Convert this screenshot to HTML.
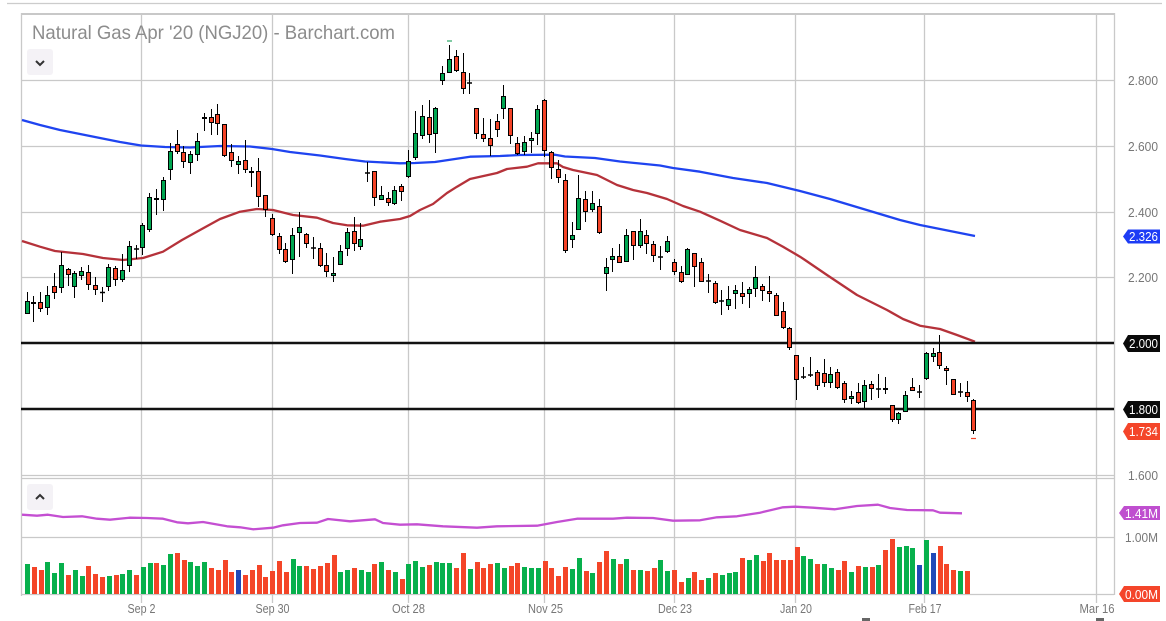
<!DOCTYPE html>
<html><head><meta charset="utf-8"><title>Natural Gas Apr '20 (NGJ20) - Barchart.com</title>
<style>html,body{margin:0;padding:0;background:#fff;width:1166px;height:621px;overflow:hidden}svg{display:block}text{font-family:"Liberation Sans",sans-serif}</style></head>
<body>
<svg width="1166" height="621" viewBox="0 0 1166 621" xmlns="http://www.w3.org/2000/svg">
<rect width="1166" height="621" fill="#fff"/>
<path d="M7 3.5H1162" stroke="#ccc" stroke-width="1.2" fill="none"/>
<path d="M21 14H1115" stroke="#c8c8c8" stroke-width="2" fill="none"/>
<path d="M21.5 13V596M1114.5 13V595M141.5 14V603M272.5 14V603M408.5 14V603M544.5 14V603M674.5 14V603M795.5 14V603M924.5 14V603M1096.5 14V603M21 80.5H1114M21 146.5H1114M21 212.5H1114M21 277.5H1114M21 475.5H1114M21 478.5H1114M21 537.5H1114M21 594.5H1114" stroke="#c9c9c9" stroke-width="1.3" fill="none"/>
<text x="32" y="39" font-size="19.5" fill="#8c8c8c" textLength="363" lengthAdjust="spacingAndGlyphs">Natural Gas Apr '20 (NGJ20) - Barchart.com</text>
<rect x="27" y="49" width="26" height="26" rx="3" fill="#f4f2f6"/>
<path d="M36 61l4 4 4-4" fill="none" stroke="#333" stroke-width="2"/>
<rect x="27" y="484" width="26" height="26" rx="3" fill="#f4f2f6"/>
<path d="M36 499l4-4 4 4" fill="none" stroke="#333" stroke-width="2"/>

<path fill="#07b04c" d="M25 564h5V594h-5zM45 562h5V594h-5zM52 573h5V594h-5zM59 563h5V594h-5zM73 570h5V594h-5zM80 576h5V594h-5zM107 576h5V594h-5zM120 574h5V594h-5zM127 570h5V594h-5zM141 567h5V594h-5zM148 563h5V594h-5zM161 565h5V594h-5zM168 554h5V594h-5zM188 562h5V594h-5zM195 566h5V594h-5zM202 562h5V594h-5zM291 559h5V594h-5zM297 566h5V594h-5zM338 572h5V594h-5zM345 570h5V594h-5zM359 570h5V594h-5zM366 572h5V594h-5zM379 562h5V594h-5zM393 572h5V594h-5zM406 564h5V594h-5zM413 561h5V594h-5zM420 567h5V594h-5zM434 562h5V594h-5zM440 563h5V594h-5zM447 563h5V594h-5zM468 569h5V594h-5zM495 563h5V594h-5zM502 568h5V594h-5zM522 567h5V594h-5zM529 568h5V594h-5zM536 568h5V594h-5zM570 569h5V594h-5zM577 558h5V594h-5zM590 573h5V594h-5zM611 559h5V594h-5zM624 559h5V594h-5zM638 570h5V594h-5zM658 560h5V594h-5zM665 571h5V594h-5zM686 578h5V594h-5zM706 578h5V594h-5zM720 575h5V594h-5zM727 573h5V594h-5zM733 572h5V594h-5zM747 560h5V594h-5zM754 555h5V594h-5zM801 556h5V594h-5zM808 559h5V594h-5zM822 564h5V594h-5zM829 568h5V594h-5zM849 572h5V594h-5zM863 567h5V594h-5zM876 565h5V594h-5zM897 547h5V594h-5zM904 546h5V594h-5zM910 548h5V594h-5zM924 540h5V594h-5zM958 571h5V594h-5z"/>
<path fill="#f44528" d="M32 567h5V594h-5zM39 570h5V594h-5zM66 575h5V594h-5zM86 566h5V594h-5zM93 574h5V594h-5zM100 577h5V594h-5zM114 575h5V594h-5zM134 575h5V594h-5zM154 563h5V594h-5zM175 553h5V594h-5zM182 560h5V594h-5zM209 568h5V594h-5zM216 570h5V594h-5zM223 560h5V594h-5zM229 572h5V594h-5zM243 575h5V594h-5zM250 570h5V594h-5zM257 565h5V594h-5zM263 577h5V594h-5zM270 571h5V594h-5zM277 561h5V594h-5zM284 572h5V594h-5zM304 566h5V594h-5zM311 569h5V594h-5zM318 566h5V594h-5zM325 563h5V594h-5zM332 555h5V594h-5zM352 568h5V594h-5zM372 564h5V594h-5zM386 570h5V594h-5zM400 579h5V594h-5zM427 565h5V594h-5zM454 568h5V594h-5zM461 553h5V594h-5zM475 562h5V594h-5zM481 568h5V594h-5zM488 564h5V594h-5zM509 566h5V594h-5zM515 563h5V594h-5zM543 561h5V594h-5zM549 568h5V594h-5zM556 576h5V594h-5zM563 567h5V594h-5zM584 571h5V594h-5zM597 562h5V594h-5zM604 551h5V594h-5zM618 564h5V594h-5zM631 570h5V594h-5zM645 571h5V594h-5zM652 568h5V594h-5zM672 570h5V594h-5zM679 582h5V594h-5zM692 572h5V594h-5zM699 580h5V594h-5zM713 573h5V594h-5zM740 558h5V594h-5zM761 561h5V594h-5zM767 553h5V594h-5zM774 560h5V594h-5zM781 560h5V594h-5zM788 560h5V594h-5zM795 547h5V594h-5zM815 564h5V594h-5zM836 570h5V594h-5zM842 561h5V594h-5zM856 566h5V594h-5zM870 567h5V594h-5zM883 550h5V594h-5zM890 539h5V594h-5zM938 546h5V594h-5zM944 564h5V594h-5zM951 570h5V594h-5zM965 571h5V594h-5z"/>
<path fill="#2049b8" d="M236 570h5V594h-5zM917 565h5V594h-5zM931 553h5V594h-5z"/>

<polyline fill="none" stroke="#c44fd2" stroke-width="2.3" stroke-linejoin="round" points="22,514.7 37,515.7 48,514.7 63,517 82,516.3 97,518.7 110,519.7 130,517.7 147,518 163,518.7 177,522.3 188,523.3 203,522 227,526.3 240,527.3 253,529.3 273,527.7 283,525.3 300,523 317,522.7 328,519 350,521.3 375,519.3 383,523 400,524.7 417,524.3 443,526.3 477,527.7 497,526.3 537,525.7 557,522 577,518.7 613,518.7 627,517.7 653,518 673,520.7 700,520.3 717,517.3 737,516.3 760,512.7 783,507.3 795,506.7 813,507.7 835,509.3 857,506 878,504.7 890,508 907,510 933,510.3 940,512.7 962,513.3"/>

<polyline fill="none" stroke="#1f44f0" stroke-width="2.3" stroke-linejoin="round" points="22,120 40,125 60,130 80,134 100,138 120,142 141,145.5 165,147 190,147.5 220,146 250,146.5 272,149 290,152 320,155.5 345,159 365,161.5 400,163.3 415,163 435,162 470,156.7 500,156 520,155 555,154.7 565,156.5 595,158 620,161.5 660,165.5 673,168 700,171.7 733,178 767,183 800,191 830,199 870,211 900,220 920,225 950,231 975,236"/>
<polyline fill="none" stroke="#b5323a" stroke-width="2.3" stroke-linejoin="round" points="22,241 40,246.7 55,251 83,254 103,258 123,260 143,258 163,251.7 182,240 200,230 220,219 240,211.7 257,209 273,210 293,215 317,217.7 333,223 347,225.3 363,225.7 380,221.7 400,219 410,216 420,210 433,204 447,193 457,186.7 470,179 497,173 507,169 527,166.7 538,163.3 557,163.3 563,167 573,170 597,175 617,185 633,190 647,193 667,199 683,206 700,211.7 720,220.7 740,230 767,238 783,246.7 800,256.7 805,260 827,275 857,295 887,310 903,319 920,325.7 940,329 957,335 975,341.7"/>

<path d="M21 343H1114M21 409H1114" stroke="#111" stroke-width="2.4" fill="none"/>

<path fill="none" stroke="#000" stroke-width="1" d="M27.5 292V314M33.5 296V322M40.5 292V312M47.5 286V315M54.5 273V299M61.5 252V293M68.5 268V286M74.5 271V298M81.5 267V280M88.5 265V290M95.5 277V295M102.5 287V302M108.5 264V291M115.5 266V286M122.5 254V282M129.5 241V272M136.5 245V259M142.5 223V255M149.5 193V232M156.5 189V215M163.5 177V211M170.5 143V180M177.5 130V154M183.5 146V168M190.5 151V174M197.5 133V161M204.5 113V131M211.5 109V135M217.5 104V135M224.5 124V157M231.5 144V167M238.5 156V174M245.5 140V173M251.5 167V187M258.5 158V207M265.5 195V217M272.5 214V236M279.5 233V254M285.5 243V263M292.5 228V274M299.5 212V257M306.5 233V248M313.5 237V259M320.5 243V267M326.5 253V277M333.5 257V282M340.5 245V265M347.5 228V256M354.5 217V251M360.5 223V250M367.5 162V182M374.5 171V206M381.5 186V200M388.5 192V206M394.5 186V205M401.5 184V201M408.5 150V178M415.5 111V160M422.5 105V139M429.5 100V143M435.5 107V153M442.5 66V85M449.5 45V73M456.5 50V72M463.5 53V94M469.5 73V94M476.5 108V139M483.5 118V142M490.5 119V156M497.5 114V137M503.5 85V119M510.5 108V144M517.5 137V155M524.5 136V155M531.5 132V153M537.5 105V145M544.5 99V157M551.5 151V179M558.5 160V183M565.5 174V253M572.5 222V248M578.5 175V230M585.5 191V222M592.5 191V212M599.5 199V234M606.5 258V291M612.5 248V272M619.5 244V263M626.5 229V262M633.5 231V260M640.5 219V248M646.5 230V254M653.5 241V262M660.5 246V270M667.5 236V253M674.5 259V275M681.5 266V283M687.5 248V275M694.5 253V287M701.5 258V282M708.5 274V293M715.5 281V304M721.5 290V315M728.5 286V310M735.5 285V309M742.5 282V304M749.5 287V308M755.5 266V297M762.5 284V301M769.5 276V302M776.5 293V316M783.5 302V329M789.5 327V350M796.5 355V400M803.5 367V379M810.5 357V377M817.5 370V390M824.5 359V387M830.5 367V388M837.5 369V389M844.5 381V403M851.5 391V404M858.5 383V404M864.5 380V408M871.5 381V400M878.5 374V398M885.5 377V394M892.5 405V422M898.5 412V424M905.5 391V412M912.5 378V391M919.5 385V398M926.5 352V380M933.5 348V362M939.5 335V369M946.5 366V385M953.5 379V395M960.5 383V397M967.5 381V402M973.5 399V434"/>
<path fill="none" stroke="#000" stroke-width="1.6" d="M100 292.5h5M134 249h5M311 248h5M365 173h5M467 83h5M658 257h5M706 281h5M719 301h5M801 377h5M808 375h5M876 389h5M917 392h5M958 392h5"/>

<path fill="#00a651" stroke="#000" stroke-width="1" d="M25.5 301.5h4V313.5h-4zM45.5 295.5h4V307.5h-4zM59.5 265.5h4V287.5h-4zM72.5 273.5h4V286.5h-4zM79.5 271.5h4V275.5h-4zM106.5 267.5h4V286.5h-4zM120.5 270.5h4V279.5h-4zM127.5 246.5h4V265.5h-4zM140.5 225.5h4V247.5h-4zM147.5 197.5h4V229.5h-4zM161.5 180.5h4V199.5h-4zM168.5 151.5h4V169.5h-4zM188.5 154.5h4V162.5h-4zM195.5 141.5h4V154.5h-4zM236.5 161.5h4V164.5h-4zM290.5 235.5h4V259.5h-4zM297.5 227.5h4V232.5h-4zM331.5 273.5h4V275.5h-4zM338.5 251.5h4V264.5h-4zM345.5 232.5h4V248.5h-4zM358.5 239.5h4V246.5h-4zM379.5 195.5h4V199.5h-4zM392.5 190.5h4V203.5h-4zM406.5 161.5h4V176.5h-4zM413.5 133.5h4V157.5h-4zM420.5 116.5h4V135.5h-4zM433.5 108.5h4V133.5h-4zM440.5 73.5h4V80.5h-4zM447.5 59.5h4V72.5h-4zM501.5 96.5h4V108.5h-4zM522.5 142.5h4V151.5h-4zM529.5 138.5h4V140.5h-4zM535.5 109.5h4V133.5h-4zM570.5 235.5h4V239.5h-4zM576.5 198.5h4V229.5h-4zM590.5 203.5h4V209.5h-4zM604.5 267.5h4V273.5h-4zM610.5 256.5h4V259.5h-4zM624.5 235.5h4V261.5h-4zM638.5 231.5h4V245.5h-4zM665.5 241.5h4V251.5h-4zM685.5 249.5h4V274.5h-4zM726.5 299.5h4V305.5h-4zM733.5 290.5h4V293.5h-4zM747.5 289.5h4V293.5h-4zM753.5 277.5h4V288.5h-4zM828.5 374.5h4V382.5h-4zM849.5 396.5h4V398.5h-4zM862.5 385.5h4V401.5h-4zM896.5 413.5h4V419.5h-4zM903.5 395.5h4V411.5h-4zM924.5 353.5h4V378.5h-4zM931.5 353.5h4V356.5h-4z"/>
<path fill="#f44327" stroke="#000" stroke-width="1" d="M31.5 302.5h4V303.5h-4zM38.5 302.5h4V308.5h-4zM52.5 286.5h4V292.5h-4zM66.5 269.5h4V274.5h-4zM86.5 272.5h4V284.5h-4zM93.5 285.5h4V289.5h-4zM113.5 268.5h4V279.5h-4zM154.5 198.5h4V199.5h-4zM175.5 144.5h4V151.5h-4zM181.5 152.5h4V161.5h-4zM202.5 117.5h4V118.5h-4zM209.5 117.5h4V122.5h-4zM215.5 114.5h4V123.5h-4zM222.5 124.5h4V155.5h-4zM229.5 152.5h4V160.5h-4zM243.5 160.5h4V169.5h-4zM249.5 171.5h4V172.5h-4zM256.5 171.5h4V196.5h-4zM263.5 195.5h4V209.5h-4zM270.5 218.5h4V234.5h-4zM277.5 236.5h4V249.5h-4zM283.5 249.5h4V261.5h-4zM304.5 234.5h4V243.5h-4zM318.5 248.5h4V265.5h-4zM324.5 265.5h4V271.5h-4zM352.5 231.5h4V243.5h-4zM372.5 171.5h4V197.5h-4zM386.5 198.5h4V202.5h-4zM399.5 186.5h4V191.5h-4zM427.5 117.5h4V134.5h-4zM454.5 56.5h4V70.5h-4zM461.5 72.5h4V88.5h-4zM474.5 108.5h4V133.5h-4zM481.5 134.5h4V138.5h-4zM488.5 138.5h4V145.5h-4zM495.5 121.5h4V129.5h-4zM508.5 108.5h4V135.5h-4zM515.5 143.5h4V153.5h-4zM542.5 100.5h4V150.5h-4zM549.5 152.5h4V167.5h-4zM556.5 169.5h4V177.5h-4zM563.5 180.5h4V250.5h-4zM583.5 199.5h4V211.5h-4zM597.5 206.5h4V232.5h-4zM617.5 256.5h4V262.5h-4zM631.5 231.5h4V245.5h-4zM644.5 235.5h4V243.5h-4zM651.5 244.5h4V255.5h-4zM672.5 262.5h4V271.5h-4zM679.5 272.5h4V281.5h-4zM692.5 253.5h4V266.5h-4zM699.5 262.5h4V281.5h-4zM713.5 283.5h4V302.5h-4zM740.5 293.5h4V296.5h-4zM760.5 286.5h4V290.5h-4zM767.5 291.5h4V293.5h-4zM774.5 295.5h4V315.5h-4zM781.5 311.5h4V327.5h-4zM787.5 328.5h4V347.5h-4zM794.5 355.5h4V379.5h-4zM815.5 372.5h4V385.5h-4zM822.5 373.5h4V382.5h-4zM835.5 372.5h4V387.5h-4zM842.5 383.5h4V399.5h-4zM856.5 392.5h4V402.5h-4zM869.5 384.5h4V388.5h-4zM883.5 388.5h4V389.5h-4zM890.5 405.5h4V419.5h-4zM910.5 387.5h4V390.5h-4zM937.5 352.5h4V365.5h-4zM944.5 368.5h4V370.5h-4zM951.5 379.5h4V394.5h-4zM965.5 392.5h4V396.5h-4zM971.5 400.5h4V430.5h-4z"/>
<path d="M971 438.5h5" stroke="#f44327" stroke-width="1.2" fill="none"/>
<path d="M447 41h5" stroke="#2aa866" stroke-width="1.2" fill="none"/>

<g font-size="13" fill="#777" text-anchor="end">
<text x="1158" y="85" textLength="30" lengthAdjust="spacingAndGlyphs">2.800</text>
<text x="1158" y="151" textLength="30" lengthAdjust="spacingAndGlyphs">2.600</text>
<text x="1158" y="217" textLength="30" lengthAdjust="spacingAndGlyphs">2.400</text>
<text x="1158" y="282" textLength="30" lengthAdjust="spacingAndGlyphs">2.200</text>
<text x="1158" y="480" textLength="30" lengthAdjust="spacingAndGlyphs">1.600</text>
<text x="1158" y="542" textLength="33" lengthAdjust="spacingAndGlyphs">1.00M</text>
</g>
<path fill="#1d3cf5" d="M1123 236.5l5-7h32v14h-32z"/>
<path fill="#0a0a0a" d="M1123 343.5l5-8.5h32v17h-32z"/>
<path fill="#0a0a0a" d="M1123 409.5l5-8.5h32v17h-32z"/>
<path fill="#f4452a" d="M1123 431.5l5-8.5h32v17h-32z"/>
<path fill="#bf4fcf" d="M1119 513l5-7h36v14h-36z"/>
<path fill="#f4452a" d="M1119 594l5-8h36v16h-36z"/>
<g font-size="13" fill="#fff">
<text x="1129" y="241" textLength="29" lengthAdjust="spacingAndGlyphs">2.326</text>
<text x="1129" y="348" textLength="29" lengthAdjust="spacingAndGlyphs">2.000</text>
<text x="1129" y="414" textLength="29" lengthAdjust="spacingAndGlyphs">1.800</text>
<text x="1129" y="436" textLength="29" lengthAdjust="spacingAndGlyphs">1.734</text>
<text x="1125" y="518" textLength="33" lengthAdjust="spacingAndGlyphs">1.41M</text>
<text x="1125" y="599" textLength="33" lengthAdjust="spacingAndGlyphs">0.00M</text>
</g>
<g font-size="13" fill="#777" text-anchor="middle">
<text x="141.5" y="613" textLength="28" lengthAdjust="spacingAndGlyphs">Sep 2</text>
<text x="272.5" y="613" textLength="34" lengthAdjust="spacingAndGlyphs">Sep 30</text>
<text x="408.5" y="613" textLength="33" lengthAdjust="spacingAndGlyphs">Oct 28</text>
<text x="545.5" y="613" textLength="35" lengthAdjust="spacingAndGlyphs">Nov 25</text>
<text x="675" y="613" textLength="34" lengthAdjust="spacingAndGlyphs">Dec 23</text>
<text x="796" y="613" textLength="32" lengthAdjust="spacingAndGlyphs">Jan 20</text>
<text x="925" y="613" textLength="33" lengthAdjust="spacingAndGlyphs">Feb 17</text>
<text x="1097" y="613" textLength="35" lengthAdjust="spacingAndGlyphs">Mar 16</text>
</g>
<rect x="862" y="618" width="8" height="3" fill="#666"/>
<rect x="1096" y="618" width="8" height="3" fill="#666"/>
</svg>
</body></html>
